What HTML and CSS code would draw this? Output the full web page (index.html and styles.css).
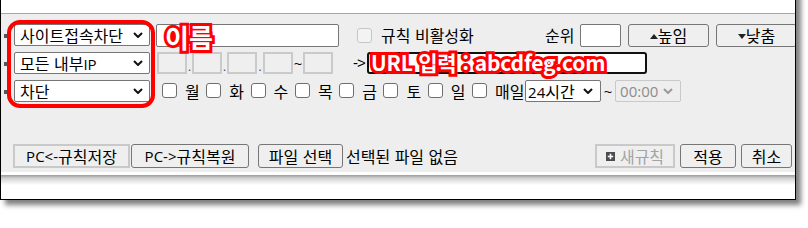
FILE: index.html
```html
<!DOCTYPE html>
<html lang="ko">
<head>
<meta charset="utf-8">
<title>규칙</title>
<link rel="stylesheet" href="styles.css">
</head>
<body>
<div class="frame">
  <div class="topstrip"></div>
  <div class="panel">
    <div class="row">
      <span class="bullet"></span>
      <div class="sel"><span>사이트접속차단</span><svg class="chev" width="10" height="6" viewBox="0 0 10 6"><path d="M1 1 L5 5 L9 1"/></svg></div>
      <div class="txt name"></div>
      <span class="chk dis off"></span>
      <span class="lbl offl">규칙 비활성화</span>
      <span class="lbl rankl">순위</span>
      <div class="txt rank"></div>
      <div class="btn mv"><svg class="tri" width="8" height="5" viewBox="0 0 8 5"><path d="M0 5 L4 0 L8 5Z"/></svg>높임</div>
      <div class="btn mv"><svg class="tri" width="8" height="5" viewBox="0 0 8 5"><path d="M0 0 L8 0 L4 5Z"/></svg>낮춤</div>
    </div>
    <div class="row">
      <span class="bullet"></span>
      <div class="sel"><span>모든 내부<span class="en">IP</span></span><svg class="chev" width="10" height="6" viewBox="0 0 10 6"><path d="M1 1 L5 5 L9 1"/></svg></div>
      <div class="ip first"></div><span class="dot">.</span>
      <div class="ip"></div><span class="dot">.</span>
      <div class="ip"></div><span class="dot w6">.</span>
      <div class="ip"></div><span class="tilde">~</span>
      <div class="ip"></div>
      <span class="arrow">-&gt;</span>
      <div class="url"></div>
    </div>
    <div class="row">
      <span class="bullet"></span>
      <div class="sel"><span>차단</span><svg class="chev" width="10" height="6" viewBox="0 0 10 6"><path d="M1 1 L5 5 L9 1"/></svg></div>
      <div class="day first"><span class="chk"></span><span class="dl">월</span></div>
      <div class="day"><span class="chk"></span><span class="dl">화</span></div>
      <div class="day"><span class="chk"></span><span class="dl">수</span></div>
      <div class="day"><span class="chk"></span><span class="dl">목</span></div>
      <div class="day"><span class="chk"></span><span class="dl">금</span></div>
      <div class="day"><span class="chk"></span><span class="dl">토</span></div>
      <div class="day"><span class="chk"></span><span class="dl">일</span></div>
      <div class="day last"><span class="chk"></span><span class="dl">매일</span></div>
      <div class="sel s24"><span><span class="en">24</span>시간</span><svg class="chev" width="10" height="6" viewBox="0 0 10 6"><path d="M1 1 L5 5 L9 1"/></svg></div>
      <span class="tl">~</span>
      <div class="sel sdis"><span class="en">00:00</span><svg class="chev" width="10" height="6" viewBox="0 0 10 6"><path d="M1 1 L5 5 L9 1"/></svg></div>
    </div>
    <div class="row bot">
      <div class="btn flat save"><span class="en">PC&lt;-</span>규칙저장</div>
      <div class="btn restore"><span class="en">PC-&gt;</span>규칙복원</div>
      <div class="btn file">파일 선택</div>
      <span class="lbl nofile">선택된 파일 없음</span>
      <div class="btn flat newr"><svg class="plus" width="9" height="9" viewBox="0 0 9 9"><rect width="9" height="9" fill="#4d4d4d"/><path d="M4.5 1.8 V7.2 M1.8 4.5 H7.2" stroke="#fff" stroke-width="1.6"/></svg>새규칙</div>
      <div class="btn apply">적용</div>
      <div class="btn cancel">취소</div>
    </div>
  </div>
  <div class="sep"></div>
</div>
<div class="ann-box"></div>
<div class="ann ann-name">이름</div>
<div class="ann ann-url">URL 입력 <span class="colon">:</span>abcdfeg.com</div>
</body>
</html>
```

FILE: styles.css
```css
* { box-sizing: border-box; }
html, body { margin: 0; padding: 0; background: #fff; }
body {
  width: 808px;
  height: 228px;
  overflow: hidden;
  position: relative;
  font-family: "Noto Sans CJK KR", sans-serif;
  font-size: 16px;
  color: #000;
}
.en { font-family: "Open Sans", "Noto Sans CJK KR", sans-serif; font-size: 15px; }
.frame {
  width: 796px;
  height: 220px;
  margin-top: -20px;
  border: 1px solid #000;
  border-top: none;
  box-shadow: 5px 5px 5px rgba(0, 0, 0, 0.5);
  overflow: hidden;
  display: flex;
  flex-direction: column;
  background: #fff;
}
.topstrip { height: 33px; flex: none; }
.panel {
  flex: none;
  height: 159px;
  border-top: 1px solid #a8a8a8;
  background: #eeeeee;
  padding: 10px 3px 0 3px;
  display: flex;
  flex-direction: column;
}
.row { display: flex; align-items: flex-start; height: 28px; flex: none; }
.row > * { flex: none; }
.bullet { width: 3px; height: 4px; background: #555; margin: 10px 7px 0 0; }

.sel {
  width: 136px;
  height: 22px;
  border: 1px solid #767676;
  border-radius: 2px;
  background: #fff;
  display: flex;
  align-items: center;
  justify-content: space-between;
  padding: 0 6px 0 5px;
  line-height: 20px;
  white-space: nowrap;
}
.chev path { fill: none; stroke: #111; stroke-width: 2; }
.s24 { width: 76px; padding: 0 7px 0 2px; }
.sdis { width: 66px; padding: 0 7px 0 4px; border-color: #c9c9c9; background: transparent; color: #8c8c8c; }
.sdis .chev path { stroke: #9a9a9a; }

.txt { background: #fff; border: 1px solid #767676; border-radius: 2px; height: 23px; }
.name { width: 183px; margin-left: 6px; }
.rank { width: 41px; }

.chk { width: 15px; height: 15px; border: 1px solid #6e6e6e; border-radius: 3px; background: #fff; display: block; }
.chk.dis { border-color: #c6c6c6; background: #f3f3f3; }
.off { margin: 4px 0 0 18px; }
.lbl { line-height: 22px; white-space: nowrap; }
.offl { margin-left: 9px; width: 164px; }
.rankl { width: 35px; }

.btn {
  height: 23px;
  border: 1px solid #767676;
  border-radius: 3px;
  background: #efefef;
  display: flex;
  align-items: center;
  justify-content: center;
  line-height: 21px;
  white-space: nowrap;
}
.mv { width: 81px; margin-left: 7px; }
.tri { margin-top: 2px; }
.tri path { fill: #222; }

.ip { width: 30px; height: 22px; border: 2px solid #cacaca; background: #efefef; }
.ip.first { margin-left: 7px; }
.dot { width: 5px; height: 22px; line-height: 22px; font-size: 11px; text-align: center; color: #3a3a6a; padding-top: 3px; }
.dot.w6 { width: 6px; }
.tilde { width: 10px; line-height: 22px; text-align: center; font-family: "Open Sans", sans-serif; font-size: 15px; }
.arrow { margin-left: 20px; width: 14px; line-height: 22px; font-family: "Liberation Sans", sans-serif; font-size: 15px; letter-spacing: -1px; white-space: nowrap; }
.url { width: 280px; height: 22px; border: 2px solid #111; border-radius: 3px; background: #fff; }

.day { display: flex; width: 44.3px; }
.day.first { margin-left: 12px; }
.day.last { width: 53px; }
.day .chk { margin-top: 3px; }
.dl { margin-left: 8px; line-height: 22px; white-space: nowrap; }
.tl { width: 14px; line-height: 22px; text-align: center; font-family: "Open Sans", sans-serif; font-size: 15px; }

.bot { margin-top: 36px; height: 24px; }
.bot .btn { height: 24px; line-height: 22px; }
.flat { border: 2px solid #c9c9c9; border-radius: 0; }
.save { margin-left: 9px; width: 117px; }
.restore { margin-left: 1px; width: 118px; }
.file { margin-left: 9px; width: 85px; }
.nofile { margin-left: 3px; line-height: 24px; }
.newr { margin-left: auto; width: 80px; color: #a3a3a3; }
.plus { margin-right: 5px; }
.apply { margin-left: 5px; width: 56px; }
.cancel { margin-left: 5px; width: 51px; }

.sep {
  flex: none;
  height: 10px;
  margin-top: 3px;
  background: linear-gradient(to bottom, #9c9c9c, #d4d4d4 35%, #ffffff);
}

.ann-box {
  position: absolute;
  left: 7px;
  top: 20px;
  width: 148px;
  height: 88px;
  border: 4px solid #ff0000;
  border-radius: 13px;
}
.ann {
  position: absolute;
  font-family: "Noto Sans CJK KR", sans-serif;
  font-weight: 700;
  color: #fff;
  -webkit-text-stroke: 6px #ff0000;
  paint-order: stroke fill;
  line-height: 1;
  white-space: nowrap;
}
.ann-name { left: 165px; top: 24px; font-size: 26px; }
.ann-url { left: 371px; top: 52px; font-size: 21px; letter-spacing: -0.2px; }
.colon { margin-right: 6px; }
```
